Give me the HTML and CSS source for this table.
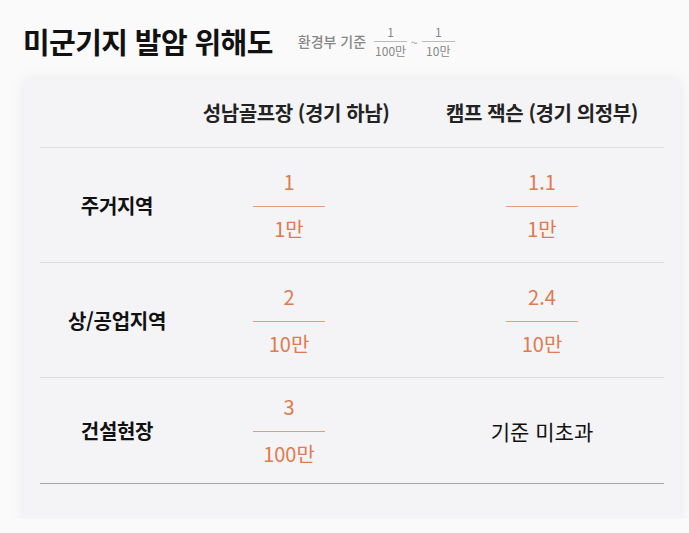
FILE: index.html
```html
<!DOCTYPE html>
<html lang="ko">
<head>
  <meta charset="UTF-8">
  <title>미군기지 발암 위해도</title>
  <link rel="stylesheet" href="styles.css">
</head>
<body>
  <div class="head">
    <h1>미군기지 발암 위해도</h1>
    <span class="std">환경부 기준</span>
    <span class="sfrac"><span>1</span><span class="sbar"></span><span>100만</span></span>
    <span class="tilde">~</span>
    <span class="sfrac"><span>1</span><span class="sbar"></span><span>10만</span></span>
  </div>

  <div class="card">
    <div class="row header">
      <div></div>
      <div class="cell">성남골프장 (경기 하남)</div>
      <div class="cell c2">캠프 잭슨 (경기 의정부)</div>
    </div>

    <div class="row">
      <div class="label">주거지역</div>
      <div class="cell"><div class="frac"><span>1</span><span class="bar"></span><span>1만</span></div></div>
      <div class="cell c2"><div class="frac"><span>1.1</span><span class="bar"></span><span>1만</span></div></div>
    </div>

    <div class="row">
      <div class="label">상/공업지역</div>
      <div class="cell"><div class="frac"><span>2</span><span class="bar"></span><span>10만</span></div></div>
      <div class="cell c2"><div class="frac"><span>2.4</span><span class="bar"></span><span>10만</span></div></div>
    </div>

    <div class="row last">
      <div class="label">건설현장</div>
      <div class="cell"><div class="frac"><span>3</span><span class="bar"></span><span>100만</span></div></div>
      <div class="cell c2 plain">기준 미초과</div>
    </div>
  </div>
</body>
</html>
```

FILE: styles.css
```css
body { margin: 0; background: #fafafa; font-family: "Noto Sans CJK KR", "Noto Sans", sans-serif; color: #111; }
.head { display: flex; align-items: center; padding: 18px 23px 0; height: 46px; }
h1 { margin: 0; font-size: 29px; font-weight: 700; letter-spacing: -0.6px; color: #111; }
.std { margin-left: 25px; font-size: 14px; color: #888; font-weight: 500; }
.sfrac { display: inline-flex; flex-direction: column; align-items: center; margin-left: 8px; font-size: 12px; color: #888; line-height: 13px; }
.sbar { display: block; width: 33px; height: 1px; background: #bbb; margin: 3px 0 2px; }
.tilde { font-size: 12px; color: #999; margin-left: 4px; margin-right: -4px; }

.card { margin: 14px 9px 0 24px; background: #f4f4f6; padding: 0 16px 35px; box-shadow: 0 2px 14px rgba(0,0,0,0.08); }
.row { display: grid; grid-template-columns: 154px 190px 1fr; align-items: center; height: 114px; border-bottom: 1px solid #dcdcdf; }
.row.header { height: 69px; }
.row.last { height: 105px; border-bottom-color: #a8a8a8; }
.header .cell { display: flex; justify-content: center; white-space: nowrap; font-size: 20px; font-weight: 700; color: #222; letter-spacing: -0.4px; }
.header .cell:nth-child(2) { padding-left: 14px; }
.cell { display: flex; justify-content: center; }
.c2 { padding-left: 36px; }
.label { text-align: center; font-size: 20px; font-weight: 700; letter-spacing: -0.3px; }
.frac { display: inline-flex; flex-direction: column; align-items: center; color: #e07a4f; font-size: 20px; line-height: 24px; }
.bar { display: block; width: 72px; height: 1px; background: #eb9a74; margin: 12px 0 10px; }
.plain { font-size: 21px; color: #111; }
```
